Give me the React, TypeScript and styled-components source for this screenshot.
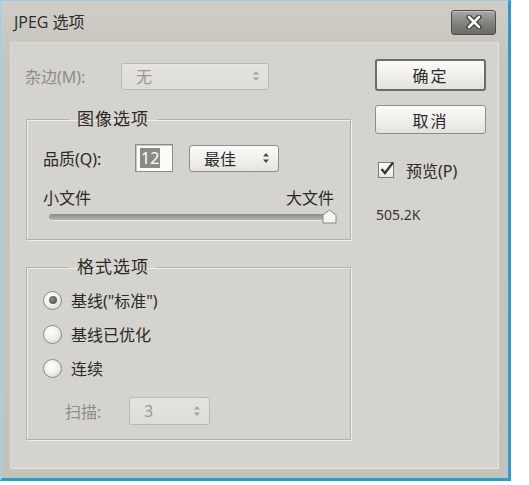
import styled, { createGlobalStyle } from 'styled-components'

const GlobalStyle = createGlobalStyle`
  html, body {
    margin: 0;
    padding: 0;
    background: #ffffff;
  }
  body {
    font-family: 'Noto Sans', 'Noto Sans CJK SC', sans-serif;
  }
`

const CJK = `'Noto Sans', 'Noto Sans CJK SC', sans-serif`

const Spinner = ({ disabled }: { disabled?: boolean }) => (
  <Arrows viewBox="0 0 8 12" width="8" height="12" $disabled={disabled}>
    <path d="M4 1 L7 4.5 L1 4.5 Z M4 11 L7 7.5 L1 7.5 Z" />
  </Arrows>
)

export default function App() {
  return (
    <>
      <GlobalStyle />
      <Window>
        <TitleBar>
          <Title>JPEG 选项</Title>
          <CloseButton aria-label="关闭">
            <svg width="20" height="14" viewBox="0 0 20 14">
              <path d="M5 2 L15 12 M15 2 L5 12" stroke="#3a3935" strokeWidth="5" strokeLinecap="round" />
              <path d="M5 2 L15 12 M15 2 L5 12" stroke="#ffffff" strokeWidth="2.6" strokeLinecap="round" />
            </svg>
          </CloseButton>
        </TitleBar>
        <Client>
          <LeftColumn>
            <Row>
              <Label $disabled $width={96}>杂边(M):</Label>
              <Select $disabled $width={148} $height={27}>
                <span>无</span>
                <Spinner disabled />
              </Select>
            </Row>

            <Group>
              <Legend>图像选项</Legend>
              <Row>
                <Label $width={92}>品质(Q):</Label>
                <NumberBox>
                  <Selected>12</Selected>
                </NumberBox>
                <Select $width={90} $height={27} $gap={16}>
                  <span>最佳</span>
                  <Spinner />
                </Select>
              </Row>
              <SliderLabels>
                <span>小文件</span>
                <span>大文件</span>
              </SliderLabels>
              <Slider>
                <Track />
                <Thumb viewBox="0 0 15 15" width="15" height="15">
                  <path d="M1 6 L7.5 1 L14 6 L14 14 L1 14 Z" fill="#f6f5f1" stroke="#8a8984" strokeWidth="1" />
                </Thumb>
              </Slider>
            </Group>

            <Group $top={17}>
              <Legend>格式选项</Legend>
              <RadioList>
                <RadioRow>
                  <Radio $checked />
                  <span>基线("标准")</span>
                </RadioRow>
                <RadioRow>
                  <Radio />
                  <span>基线已优化</span>
                </RadioRow>
                <RadioRow>
                  <Radio />
                  <span>连续</span>
                </RadioRow>
              </RadioList>
              <ScanRow>
                <Label $disabled $width={64}>扫描:</Label>
                <Select $disabled $width={81} $height={28}>
                  <span>3</span>
                  <Spinner disabled />
                </Select>
              </ScanRow>
            </Group>
          </LeftColumn>

          <RightColumn>
            <Button $primary>确定</Button>
            <Button>取消</Button>
            <CheckRow>
              <CheckBox>
                <svg width="18" height="18" viewBox="0 0 18 18">
                  <path d="M3.5 9 L7 13 L15 2.5" fill="none" stroke="#3b3a37" strokeWidth="2.4" />
                </svg>
              </CheckBox>
              <span>预览(P)</span>
            </CheckRow>
            <FileSize>505.2K</FileSize>
          </RightColumn>
        </Client>
      </Window>
    </>
  )
}

const Window = styled.div`
  width: 506px;
  height: 477px;
  display: flex;
  flex-direction: column;
  border-top: 1px solid #9fcbe0;
  border-left: 2px solid #a9cedd;
  border-right: 3px solid #2f9bd1;
  border-bottom: 3px solid #2f9bd1;
  background: linear-gradient(to bottom, #cfcdc6 0%, #c6c5be 12%, #c3c2bb 100%);
`

const TitleBar = styled.div`
  height: 41px;
  flex-shrink: 0;
  display: flex;
  align-items: center;
  justify-content: space-between;
  padding: 0 12px 2px 12px;
  box-sizing: border-box;
`

const Title = styled.div`
  font-family: 'Open Sans', 'Noto Sans CJK SC', sans-serif;
  font-size: 16px;
  color: #2d2c2a;
`

const CloseButton = styled.button`
  width: 45px;
  height: 25px;
  margin-top: 3px;
  padding: 0;
  display: flex;
  align-items: center;
  justify-content: center;
  border: 1px solid #4f4e4a;
  border-radius: 3px;
  background: linear-gradient(to bottom, #a9a8a2 0%, #85847e 50%, #6a6964 100%);
  box-shadow: inset 0 1px 0 rgba(255, 255, 255, 0.35);
`

const Client = styled.div`
  margin: 0 10px 10px 8px;
  flex: 1;
  display: grid;
  grid-template-columns: 326px 111px;
  column-gap: 24px;
  align-items: start;
  padding: 16px 0 0 14px;
  background: #d5d3cd;
  border: 1px solid #dcdad4;
  box-shadow: 1px 1px 0 #e4e1dc;
`

const LeftColumn = styled.div`
  display: flex;
  flex-direction: column;
`

const Row = styled.div`
  display: flex;
  align-items: center;
  height: 28px;
  margin-top: 3px;
`

const Label = styled.span<{ $disabled?: boolean; $width: number }>`
  width: ${props => props.$width}px;
  flex-shrink: 0;
  font-family: ${CJK};
  font-size: 16px;
  color: ${props => (props.$disabled ? '#8d8c87' : '#2b2a28')};
`

const Select = styled.div<{ $disabled?: boolean; $width: number; $height: number; $gap?: number }>`
  width: ${props => props.$width}px;
  height: ${props => props.$height}px;
  margin-left: ${props => props.$gap || 0}px;
  box-sizing: border-box;
  display: flex;
  align-items: center;
  justify-content: space-between;
  padding: 0 8px 0 14px;
  border-radius: 3px;
  font-family: ${CJK};
  font-size: 16px;
  color: ${props => (props.$disabled ? '#9a9994' : '#2b2a28')};
  border: 1px solid ${props => (props.$disabled ? '#bab9b3' : '#8f8e89')};
  background: ${props =>
    props.$disabled
      ? 'linear-gradient(to bottom, #e4e3de, #dddcd7)'
      : 'linear-gradient(to bottom, #fbfbf9, #e6e5e0)'};
`

const Arrows = styled.svg<{ $disabled?: boolean }>`
  fill: ${props => (props.$disabled ? '#a3a29d' : '#4b4a46')};
`

const NumberBox = styled.div`
  width: 38px;
  height: 28px;
  box-sizing: border-box;
  display: flex;
  align-items: center;
  padding-left: 4px;
  background: #fbfbf9;
  border: 1px solid #8e8d88;
  box-shadow: inset 1px 1px 0 #c9c8c3;
`

const Selected = styled.span`
  background: #8b8a85;
  color: #ffffff;
  font-family: 'Noto Sans', sans-serif;
  font-size: 16px;
  line-height: 20px;
  padding: 0 1px;
`

const Group = styled.fieldset<{ $top?: number }>`
  margin: ${props => props.$top ?? 19}px 0 0 1px;
  padding: 12px 14px 14px 16px;
  min-width: 0;
  border: 1px solid #b3b2ac;
  box-shadow: 1px 1px 0 #eeede8, inset 1px 1px 0 #eeede8;
`

const Legend = styled.legend`
  margin-left: 26px;
  padding: 0 8px;
  font-family: ${CJK};
  font-size: 17px;
  line-height: 20px;
  letter-spacing: 1px;
  color: #2b2a28;
`

const SliderLabels = styled.div`
  display: flex;
  justify-content: space-between;
  margin-top: 16px;
  padding-right: 2px;
  font-family: ${CJK};
  font-size: 16px;
  line-height: 20px;
  color: #2b2a28;
`

const Slider = styled.div`
  position: relative;
  height: 16px;
  margin: 1px 0 0 6px;
  display: flex;
  align-items: center;
`

const Track = styled.div`
  flex: 1;
  height: 6px;
  border-radius: 3px;
  background: linear-gradient(to bottom, #8e8d88, #b3b2ad);
  box-shadow: 0 1px 0 #eceae5;
`

const Thumb = styled.svg`
  position: absolute;
  right: -1px;
  top: 0;
`

const RadioList = styled.div`
  display: flex;
  flex-direction: column;
  gap: 12px;
`

const RadioRow = styled.div`
  display: flex;
  align-items: center;
  gap: 9px;
  height: 22px;
  font-family: ${CJK};
  font-size: 16px;
  color: #2b2a28;
`

const Radio = styled.span<{ $checked?: boolean }>`
  width: 19px;
  height: 19px;
  box-sizing: border-box;
  border-radius: 50%;
  border: 1px solid #8c8b86;
  background: radial-gradient(circle at 40% 35%, #ffffff 0%, #f2f1ee 45%, #cfcec9 100%);
  display: flex;
  align-items: center;
  justify-content: center;

  &::after {
    content: '';
    display: ${props => (props.$checked ? 'block' : 'none')};
    width: 8px;
    height: 8px;
    border-radius: 50%;
    background: radial-gradient(circle at 40% 35%, #8a8985, #4a4946);
  }
`

const ScanRow = styled.div`
  display: flex;
  align-items: center;
  margin: 18px 0 0 22px;
`

const RightColumn = styled.div`
  display: flex;
  flex-direction: column;
`

const Button = styled.button<{ $primary?: boolean }>`
  width: 111px;
  height: ${props => (props.$primary ? 32 : 29)}px;
  margin-bottom: ${props => (props.$primary ? 14 : 0)}px;
  padding: 0;
  box-sizing: border-box;
  border-radius: 3px;
  font-family: ${CJK};
  font-size: 16px;
  letter-spacing: 2px;
  color: #2b2a28;
  border: ${props => (props.$primary ? '2px solid #6c6b66' : '1px solid #8f8e89')};
  background: linear-gradient(to bottom, #fbfbf9 0%, #f1f0ec 50%, #e2e1dc 100%);
`

const CheckRow = styled.div`
  display: flex;
  align-items: center;
  gap: 12px;
  margin-top: 26px;
  height: 20px;
  padding-left: 3px;
  font-family: ${CJK};
  font-size: 16px;
  color: #2b2a28;
`

const CheckBox = styled.span`
  position: relative;
  width: 16px;
  height: 16px;
  box-sizing: border-box;
  border: 1px solid #7d7c77;
  background: linear-gradient(to bottom, #ffffff, #e9e8e4);

  svg {
    position: absolute;
    left: -1px;
    top: -3px;
  }
`

const FileSize = styled.div`
  margin-top: 25px;
  padding-left: 1px;
  font-family: 'Noto Sans', sans-serif;
  font-size: 14px;
  line-height: 20px;
  color: #3a3936;
`
